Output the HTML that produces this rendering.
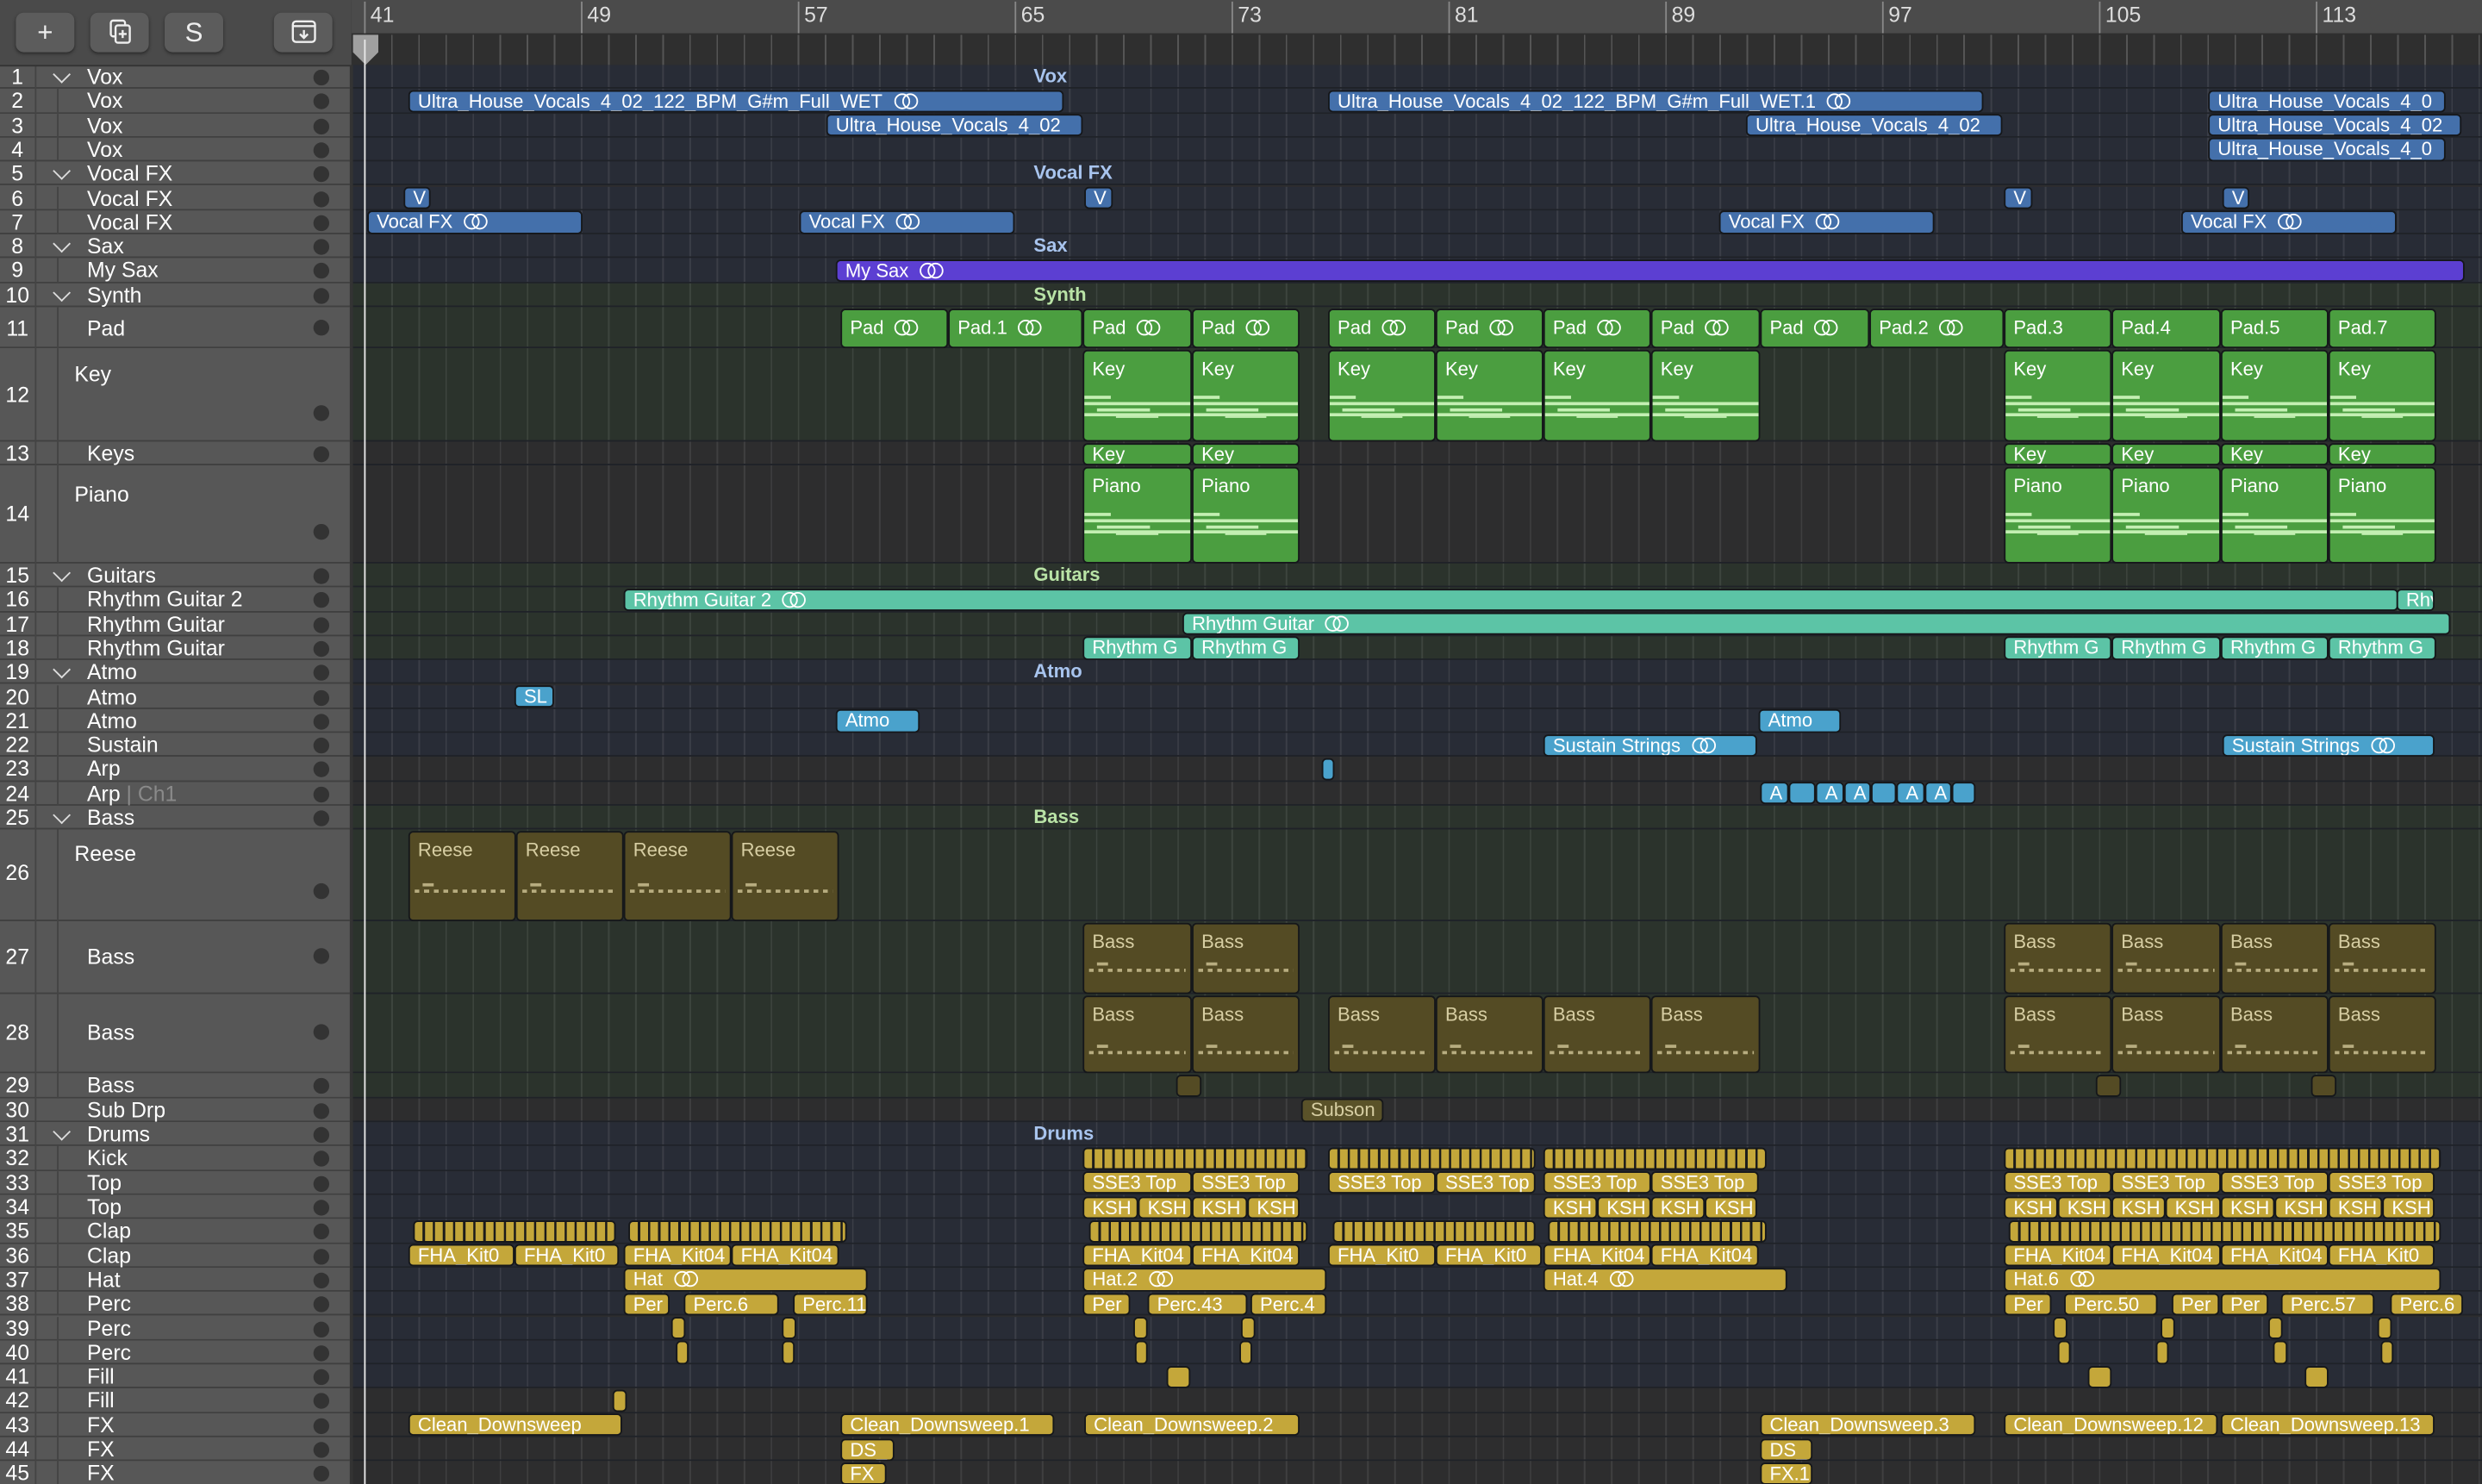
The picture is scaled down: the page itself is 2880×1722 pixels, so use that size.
<!DOCTYPE html>
<html><head><meta charset="utf-8">
<style>
html,body{margin:0;padding:0;background:#2d2d2e;overflow:hidden}
#S{position:absolute;left:0;top:0;width:1568px;height:937.6px;transform:scale(1.83674);transform-origin:0 0;font-family:"Liberation Sans",sans-serif;overflow:hidden;background:#2d2d2e}
.L{position:absolute;left:0;width:1568px;box-shadow:inset 0 -1px #1f2228;background-image:repeating-linear-gradient(to right,rgba(255,255,255,.085) 0 1px,transparent 1px 17.125px);background-position:230px 0}
.B{background-color:#282c36}.G{background-color:#2b332c}.N{background-color:#2d2d2e}
.r{position:absolute;top:0.5px;bottom:0.5px;box-sizing:border-box;border:1px solid #15171a;border-radius:3px;color:#fff;font-size:12px;font-weight:normal;line-height:12.5px;padding-left:5px;white-space:nowrap;overflow:hidden}
.b{background:#4470ab}.p{background:#5c3fd2}.g{background:#4b9e40}.t{background:#5cc4a6;}.lb{background:#4aa2cc}.o{background:#544b24;color:#d7cea3}.y{background:#c4a73a}
.k{background:repeating-linear-gradient(to right,#c4a73a 0 5px,#1b1b1b 5px 6.4px);padding:0}
.tall{padding-top:4px;line-height:14px}
.lp{display:inline-block;position:relative;width:15px;height:10px;margin-left:7px;vertical-align:-1px}
.lp:before,.lp:after{content:"";position:absolute;top:0;width:8px;height:8px;border:1.3px solid currentColor;border-radius:50%}
.lp:before{left:0}.lp:after{left:5px}
.nt{position:absolute;left:0;right:0;height:14px;background:linear-gradient(#c4efb3,#c4efb3) 0 0/25% 2px no-repeat,linear-gradient(#c4efb3,#c4efb3) 0 4px/100% 2px no-repeat,linear-gradient(#c4efb3,#c4efb3) 25% 8px/50% 2px no-repeat,linear-gradient(#c4efb3,#c4efb3) 0 11px/100% 2px no-repeat,linear-gradient(#c4efb3,#c4efb3) 50% 13px/40% 1px no-repeat}
.od{position:absolute;left:3px;right:3px;height:6px;background:repeating-linear-gradient(to right,#b8ad80 0 3px,transparent 3px 6px) 0 4px/100% 2px no-repeat,linear-gradient(#b8ad80,#b8ad80) 10% 0/12% 2px no-repeat}
.fl{position:absolute;left:653px;top:1px;font-size:12px;font-weight:bold;line-height:13px}
#TL{position:absolute;left:0;top:41px;width:221px;height:900px;background:#575757;z-index:5;box-shadow:1px 0 #3c3c3c}
.T{position:absolute;left:0;width:221px;box-shadow:inset 0 -1px #404040;color:#fff;font-size:13.5px}
.T .n{position:absolute;left:0;width:22px;text-align:center;font-size:13.5px}
.T .nm{position:absolute;left:55px}
.T .dt{position:absolute;left:198px;width:10px;height:10px;border-radius:50%;background:#333}
.T .cv{position:absolute;left:35px;width:7px;height:7px;border-right:1.3px solid #ddd;border-bottom:1.3px solid #ddd;transform:rotate(45deg)}
.ch{position:absolute;left:36px;top:0;bottom:0;border-left:1px solid #444}
#nc{position:absolute;left:22px;top:41px;width:1px;height:900px;background:#444;z-index:6}
#HD{position:absolute;left:0;top:0;width:222px;height:41px;background:#4a4a4a;z-index:7;box-shadow:0 1px #333}
.bt{position:absolute;top:8px;width:37px;height:25px;border-radius:5px;background:#5c5c5c;box-shadow:0 1px 2px #2a2a2a;color:#eee;text-align:center;font-size:17px;line-height:25px}
#RU{position:absolute;left:222px;top:0;width:1346px;height:41px;background:#2f2f2f;z-index:4}
#RU .top{position:absolute;left:0;top:0;right:0;height:21px;background:#4b4b4b}
#RU .tk{position:absolute;top:22px;bottom:0;left:8px;right:0;background:repeating-linear-gradient(to right,#555 0 1px,transparent 1px 17.125px)}
.bn{position:absolute;top:1px;color:#ddd;font-size:13.5px;border-left:1px solid #888;padding-left:3px;height:20px;line-height:17px}
</style></head><body><div id="S">

<div id="HD">
<div class="bt" style="left:10px">+</div>
<div class="bt" style="left:57px"><svg width="14" height="16" viewBox="0 0 14 16" style="margin-top:4px" fill="none" stroke="#eee" stroke-width="1.3"><rect x="1" y="1" width="9" height="10" rx="1.5"/><rect x="4" y="4" width="9" height="11" rx="1.5" fill="#5c5c5c"/><path d="M8.5 7v5M6 9.5h5"/></svg></div>
<div class="bt" style="left:104px">S</div>
<div class="bt" style="left:173px"><svg width="16" height="16" viewBox="0 0 16 16" style="margin-top:4px" fill="none" stroke="#eee" stroke-width="1.3"><rect x="1" y="1.5" width="14" height="13" rx="2"/><path d="M1 4.5h14M8 7v5M5.5 9.5L8 12l2.5-2.5"/></svg></div>
</div>

<div id="RU"><div class="top"></div><div class="tk"></div>
<div class="bn" style="left:8px">41</div><div class="bn" style="left:145px">49</div><div class="bn" style="left:282px">57</div><div class="bn" style="left:419px">65</div><div class="bn" style="left:556px">73</div><div class="bn" style="left:693px">81</div><div class="bn" style="left:830px">89</div><div class="bn" style="left:967px">97</div><div class="bn" style="left:1104px">105</div><div class="bn" style="left:1241px">113</div>
<svg style="position:absolute;left:0;top:21px" width="18" height="20"><path d="M1 1h16v11l-8 8-8-8z" fill="#a0a0a0"/></svg>
</div>
<div style="position:absolute;left:230px;top:25px;width:1px;height:913px;background:#e8e8e8;z-index:8"></div>

<div class="L B" style="top:41px;height:15.3px"><span class="fl" style="color:#a8c4ee">Vox</span></div>
<div class="L B" style="top:56.3px;height:15.3px"><b class="r b" style="left:258px;width:414px">Ultra_House_Vocals_4_02_122_BPM_G#m_Full_WET<i class="lp"></i></b><b class="r b" style="left:839px;width:414px">Ultra_House_Vocals_4_02_122_BPM_G#m_Full_WET.1<i class="lp"></i></b><b class="r b" style="left:1395px;width:150px">Ultra_House_Vocals_4_0</b></div>
<div class="L B" style="top:71.6px;height:15.3px"><b class="r b" style="left:522px;width:162px">Ultra_House_Vocals_4_02</b><b class="r b" style="left:1103px;width:162px">Ultra_House_Vocals_4_02</b><b class="r b" style="left:1395px;width:160px">Ultra_House_Vocals_4_02</b></div>
<div class="L B" style="top:86.9px;height:15.3px"><b class="r b" style="left:1395px;width:150px">Ultra_House_Vocals_4_0</b></div>
<div class="L B" style="top:102.2px;height:15.3px"><span class="fl" style="color:#a8c4ee">Vocal FX</span></div>
<div class="L B" style="top:117.5px;height:15.3px"><b class="r b" style="left:255px;width:17px">V</b><b class="r b" style="left:685px;width:18px">V</b><b class="r b" style="left:1266px;width:18px">V</b><b class="r b" style="left:1404px;width:17px">V</b></div>
<div class="L B" style="top:132.8px;height:15.3px"><b class="r b" style="left:232px;width:136px">Vocal FX<i class="lp"></i></b><b class="r b" style="left:505px;width:136px">Vocal FX<i class="lp"></i></b><b class="r b" style="left:1086px;width:136px">Vocal FX<i class="lp"></i></b><b class="r b" style="left:1378px;width:136px">Vocal FX<i class="lp"></i></b></div>
<div class="L B" style="top:148.1px;height:15.3px"><span class="fl" style="color:#a8c4ee">Sax</span></div>
<div class="L B" style="top:163.4px;height:15.3px"><b class="r p" style="left:528px;width:1029px">My Sax<i class="lp"></i></b></div>
<div class="L G" style="top:178.7px;height:15.3px"><span class="fl" style="color:#b9e3a6">Synth</span></div>
<div class="L G" style="top:194px;height:26px"><b class="r g tall" style="left:531px;width:68px">Pad<i class="lp"></i></b><b class="r g tall" style="left:599px;width:85px">Pad.1<i class="lp"></i></b><b class="r g tall" style="left:684px;width:69px">Pad<i class="lp"></i></b><b class="r g tall" style="left:753px;width:68px">Pad<i class="lp"></i></b><b class="r g tall" style="left:839px;width:68px">Pad<i class="lp"></i></b><b class="r g tall" style="left:907px;width:68px">Pad<i class="lp"></i></b><b class="r g tall" style="left:975px;width:68px">Pad<i class="lp"></i></b><b class="r g tall" style="left:1043px;width:69px">Pad<i class="lp"></i></b><b class="r g tall" style="left:1112px;width:69px">Pad<i class="lp"></i></b><b class="r g tall" style="left:1181px;width:85px">Pad.2<i class="lp"></i></b><b class="r g tall" style="left:1266px;width:68px">Pad.3</b><b class="r g tall" style="left:1334px;width:69px">Pad.4</b><b class="r g tall" style="left:1403px;width:68px">Pad.5</b><b class="r g tall" style="left:1471px;width:68px">Pad.7</b></div>
<div class="L G" style="top:220px;height:59px">
<b class="r g tall" style="left:684px;width:69px">Key<i class="nt" style="top:28px"></i></b><b class="r g tall" style="left:753px;width:68px">Key<i class="nt" style="top:28px"></i></b><b class="r g tall" style="left:839px;width:68px">Key<i class="nt" style="top:28px"></i></b><b class="r g tall" style="left:907px;width:68px">Key<i class="nt" style="top:28px"></i></b><b class="r g tall" style="left:975px;width:68px">Key<i class="nt" style="top:28px"></i></b><b class="r g tall" style="left:1043px;width:69px">Key<i class="nt" style="top:28px"></i></b><b class="r g tall" style="left:1266px;width:68px">Key<i class="nt" style="top:28px"></i></b><b class="r g tall" style="left:1334px;width:69px">Key<i class="nt" style="top:28px"></i></b><b class="r g tall" style="left:1403px;width:68px">Key<i class="nt" style="top:28px"></i></b><b class="r g tall" style="left:1471px;width:68px">Key<i class="nt" style="top:28px"></i></b></div>
<div class="L N" style="top:279px;height:15px"><b class="r g" style="left:684px;width:69px">Key</b><b class="r g" style="left:753px;width:68px">Key</b><b class="r g" style="left:1266px;width:68px">Key</b><b class="r g" style="left:1334px;width:69px">Key</b><b class="r g" style="left:1403px;width:68px">Key</b><b class="r g" style="left:1471px;width:68px">Key</b></div>
<div class="L N" style="top:294px;height:62px">
<b class="r g tall" style="left:684px;width:69px">Piano<i class="nt" style="top:28px"></i></b><b class="r g tall" style="left:753px;width:68px">Piano<i class="nt" style="top:28px"></i></b><b class="r g tall" style="left:1266px;width:68px">Piano<i class="nt" style="top:28px"></i></b><b class="r g tall" style="left:1334px;width:69px">Piano<i class="nt" style="top:28px"></i></b><b class="r g tall" style="left:1403px;width:68px">Piano<i class="nt" style="top:28px"></i></b><b class="r g tall" style="left:1471px;width:68px">Piano<i class="nt" style="top:28px"></i></b></div>
<div class="L G" style="top:356px;height:15.3px"><span class="fl" style="color:#b9e3a6">Guitars</span></div>
<div class="L G" style="top:371.3px;height:15.3px"><b class="r t" style="left:394px;width:1121px">Rhythm Guitar 2<i class="lp"></i></b><b class="r t" style="left:1514px;width:24px">Rhy</b></div>
<div class="L G" style="top:386.6px;height:15.3px"><b class="r t" style="left:747px;width:801px">Rhythm Guitar<i class="lp"></i></b></div>
<div class="L G" style="top:401.9px;height:15.3px"><b class="r t" style="left:684px;width:69px">Rhythm G</b><b class="r t" style="left:753px;width:68px">Rhythm G</b><b class="r t" style="left:1266px;width:68px">Rhythm G</b><b class="r t" style="left:1334px;width:69px">Rhythm G</b><b class="r t" style="left:1403px;width:68px">Rhythm G</b><b class="r t" style="left:1471px;width:68px">Rhythm G</b></div>
<div class="L B" style="top:417.2px;height:15.3px"><span class="fl" style="color:#a8c4ee">Atmo</span></div>
<div class="L B" style="top:432.5px;height:15.3px"><b class="r lb" style="left:325px;width:25px">SL</b></div>
<div class="L B" style="top:447.8px;height:15.3px"><b class="r lb" style="left:528px;width:53px">Atmo</b><b class="r lb" style="left:1111px;width:52px">Atmo</b></div>
<div class="L B" style="top:463.1px;height:15.3px"><b class="r lb" style="left:975px;width:135px">Sustain Strings<i class="lp"></i></b><b class="r lb" style="left:1404px;width:134px">Sustain Strings<i class="lp"></i></b></div>
<div class="L N" style="top:478.4px;height:15.3px"><b class="r lb" style="left:835px;width:8px;padding:0"></b></div>
<div class="L N" style="top:493.7px;height:15.3px"><b class="r lb" style="left:1112px;width:18px">A</b><b class="r lb" style="left:1130px;width:17px"></b><b class="r lb" style="left:1147px;width:18px">A</b><b class="r lb" style="left:1165px;width:17px">A</b><b class="r lb" style="left:1182px;width:16px"></b><b class="r lb" style="left:1198px;width:18px">A</b><b class="r lb" style="left:1216px;width:17px">A</b><b class="r lb" style="left:1233px;width:15px"></b></div>
<div class="L G" style="top:509px;height:15px"><span class="fl" style="color:#b9e3a6">Bass</span></div>
<div class="L G" style="top:524px;height:58px"><b class="r o tall" style="left:258px;width:68px">Reese<i class="od" style="top:32px"></i></b><b class="r o tall" style="left:326px;width:68px">Reese<i class="od" style="top:32px"></i></b><b class="r o tall" style="left:394px;width:68px">Reese<i class="od" style="top:32px"></i></b><b class="r o tall" style="left:462px;width:68px">Reese<i class="od" style="top:32px"></i></b></div>
<div class="L G" style="top:582px;height:46px"><b class="r o tall" style="left:684px;width:69px">Bass<i class="od" style="top:24px"></i></b><b class="r o tall" style="left:753px;width:68px">Bass<i class="od" style="top:24px"></i></b><b class="r o tall" style="left:1266px;width:68px">Bass<i class="od" style="top:24px"></i></b><b class="r o tall" style="left:1334px;width:69px">Bass<i class="od" style="top:24px"></i></b><b class="r o tall" style="left:1403px;width:68px">Bass<i class="od" style="top:24px"></i></b><b class="r o tall" style="left:1471px;width:68px">Bass<i class="od" style="top:24px"></i></b></div>
<div class="L G" style="top:628px;height:50px"><b class="r o tall" style="left:684px;width:69px">Bass<i class="od" style="top:30px"></i></b><b class="r o tall" style="left:753px;width:68px">Bass<i class="od" style="top:30px"></i></b><b class="r o tall" style="left:839px;width:68px">Bass<i class="od" style="top:30px"></i></b><b class="r o tall" style="left:907px;width:68px">Bass<i class="od" style="top:30px"></i></b><b class="r o tall" style="left:975px;width:68px">Bass<i class="od" style="top:30px"></i></b><b class="r o tall" style="left:1043px;width:69px">Bass<i class="od" style="top:30px"></i></b><b class="r o tall" style="left:1266px;width:68px">Bass<i class="od" style="top:30px"></i></b><b class="r o tall" style="left:1334px;width:69px">Bass<i class="od" style="top:30px"></i></b><b class="r o tall" style="left:1403px;width:68px">Bass<i class="od" style="top:30px"></i></b><b class="r o tall" style="left:1471px;width:68px">Bass<i class="od" style="top:30px"></i></b></div>
<div class="L G" style="top:678px;height:15.8px"><b class="r o" style="left:743px;width:16px"></b><b class="r o" style="left:1324px;width:16px"></b><b class="r o" style="left:1460px;width:16px"></b></div>
<div class="L N" style="top:693.8px;height:15.3px"><b class="r o" style="left:822px;width:52px;background:#5a5229">Subson</b></div>
<div class="L B" style="top:709.1px;height:15.3px"><span class="fl" style="color:#a8c4ee">Drums</span></div>
<div class="L B" style="top:724.4px;height:15.3px"><b class="r k" style="left:684px;width:142px"></b><b class="r k" style="left:839px;width:131px"></b><b class="r k" style="left:975px;width:141px"></b><b class="r k" style="left:1266px;width:276px"></b></div>
<div class="L B" style="top:739.7px;height:15.3px"><b class="r y" style="left:684px;width:69px">SSE3 Top</b><b class="r y" style="left:753px;width:68px">SSE3 Top</b><b class="r y" style="left:839px;width:68px">SSE3 Top</b><b class="r y" style="left:907px;width:63px">SSE3 Top</b><b class="r y" style="left:975px;width:68px">SSE3 Top</b><b class="r y" style="left:1043px;width:68px">SSE3 Top</b><b class="r y" style="left:1266px;width:68px">SSE3 Top</b><b class="r y" style="left:1334px;width:69px">SSE3 Top</b><b class="r y" style="left:1403px;width:68px">SSE3 Top</b><b class="r y" style="left:1471px;width:67px">SSE3 Top</b></div>
<div class="L B" style="top:755px;height:15.3px"><b class="r y" style="left:684px;width:35px">KSH</b><b class="r y" style="left:719px;width:34px">KSH</b><b class="r y" style="left:753px;width:35px">KSH</b><b class="r y" style="left:788px;width:33px">KSH</b><b class="r y" style="left:975px;width:34px">KSH</b><b class="r y" style="left:1009px;width:34px">KSH</b><b class="r y" style="left:1043px;width:34px">KSH</b><b class="r y" style="left:1077px;width:33px">KSH</b><b class="r y" style="left:1266px;width:34px">KSH</b><b class="r y" style="left:1300px;width:34px">KSH</b><b class="r y" style="left:1334px;width:34px">KSH</b><b class="r y" style="left:1368px;width:35px">KSH</b><b class="r y" style="left:1403px;width:34px">KSH</b><b class="r y" style="left:1437px;width:34px">KSH</b><b class="r y" style="left:1471px;width:34px">KSH</b><b class="r y" style="left:1505px;width:33px">KSH</b></div>
<div class="L B" style="top:770.3px;height:15.3px"><b class="r k" style="left:261px;width:128px"></b><b class="r k" style="left:397px;width:138px"></b><b class="r k" style="left:688px;width:138px"></b><b class="r k" style="left:842px;width:128px"></b><b class="r k" style="left:978px;width:138px"></b><b class="r k" style="left:1269px;width:273px"></b></div>
<div class="L B" style="top:785.6px;height:15.3px"><b class="r y" style="left:258px;width:67px">FHA_Kit0</b><b class="r y" style="left:325px;width:66px">FHA_Kit0</b><b class="r y" style="left:394px;width:68px">FHA_Kit04</b><b class="r y" style="left:462px;width:68px">FHA_Kit04</b><b class="r y" style="left:684px;width:69px">FHA_Kit04</b><b class="r y" style="left:753px;width:68px">FHA_Kit04</b><b class="r y" style="left:839px;width:68px">FHA_Kit0</b><b class="r y" style="left:907px;width:67px">FHA_Kit0</b><b class="r y" style="left:975px;width:68px">FHA_Kit04</b><b class="r y" style="left:1043px;width:68px">FHA_Kit04</b><b class="r y" style="left:1266px;width:68px">FHA_Kit04</b><b class="r y" style="left:1334px;width:69px">FHA_Kit04</b><b class="r y" style="left:1403px;width:68px">FHA_Kit04</b><b class="r y" style="left:1471px;width:67px">FHA_Kit0</b></div>
<div class="L B" style="top:800.9px;height:15.3px"><b class="r y" style="left:394px;width:154px">Hat<i class="lp"></i></b><b class="r y" style="left:684px;width:154px">Hat.2<i class="lp"></i></b><b class="r y" style="left:975px;width:154px">Hat.4<i class="lp"></i></b><b class="r y" style="left:1266px;width:276px">Hat.6<i class="lp"></i></b></div>
<div class="L B" style="top:816.2px;height:15.3px"><b class="r y" style="left:394px;width:29px">Per</b><b class="r y" style="left:432px;width:60px">Perc.6</b><b class="r y" style="left:501px;width:47px">Perc.11</b><b class="r y" style="left:684px;width:30px">Per</b><b class="r y" style="left:725px;width:63px">Perc.43</b><b class="r y" style="left:790px;width:48px">Perc.4</b><b class="r y" style="left:1266px;width:30px">Per</b><b class="r y" style="left:1304px;width:59px">Perc.50</b><b class="r y" style="left:1372px;width:30px">Per</b><b class="r y" style="left:1403px;width:30px">Per</b><b class="r y" style="left:1441px;width:59px">Perc.57</b><b class="r y" style="left:1510px;width:46px">Perc.6</b></div>
<div class="L B" style="top:831.5px;height:15.3px"><b class="r y" style="left:424px;width:9px;padding:0"></b><b class="r y" style="left:494px;width:9px;padding:0"></b><b class="r y" style="left:716px;width:9px;padding:0"></b><b class="r y" style="left:784px;width:9px;padding:0"></b><b class="r y" style="left:1297px;width:9px;padding:0"></b><b class="r y" style="left:1365px;width:9px;padding:0"></b><b class="r y" style="left:1433px;width:9px;padding:0"></b><b class="r y" style="left:1502px;width:9px;padding:0"></b></div>
<div class="L B" style="top:846.8px;height:15.3px"><b class="r y" style="left:427px;width:8px;padding:0"></b><b class="r y" style="left:494px;width:8px;padding:0"></b><b class="r y" style="left:717px;width:8px;padding:0"></b><b class="r y" style="left:783px;width:8px;padding:0"></b><b class="r y" style="left:1300px;width:8px;padding:0"></b><b class="r y" style="left:1362px;width:8px;padding:0"></b><b class="r y" style="left:1436px;width:9px;padding:0"></b><b class="r y" style="left:1504px;width:8px;padding:0"></b></div>
<div class="L B" style="top:862.1px;height:15.3px"><b class="r y" style="left:737px;width:15px;padding:0"></b><b class="r y" style="left:1319px;width:15px;padding:0"></b><b class="r y" style="left:1456px;width:15px;padding:0"></b></div>
<div class="L N" style="top:877.4px;height:15.3px"><b class="r y" style="left:387px;width:9px;padding:0"></b></div>
<div class="L N" style="top:892.7px;height:15.3px"><b class="r y" style="left:258px;width:135px">Clean_Downsweep</b><b class="r y" style="left:531px;width:135px">Clean_Downsweep.1</b><b class="r y" style="left:685px;width:136px">Clean_Downsweep.2</b><b class="r y" style="left:1112px;width:136px">Clean_Downsweep.3</b><b class="r y" style="left:1266px;width:135px">Clean_Downsweep.12</b><b class="r y" style="left:1403px;width:135px">Clean_Downsweep.13</b></div>
<div class="L N" style="top:908px;height:15.3px"><b class="r y" style="left:531px;width:34px">DS_</b><b class="r y" style="left:1112px;width:33px">DS_</b></div>
<div class="L N" style="top:923.3px;height:15.3px"><b class="r y" style="left:531px;width:29px">FX</b><b class="r y" style="left:1112px;width:33px">FX.1</b></div>

<div id="nc"></div>
<div id="TL">
<div class="T" style="top:0;height:15.3px"><span class="n">1</span><i class="cv" style="top:2px"></i><span class="nm">Vox</span><i class="dt" style="top:3px"></i></div>
<div class="T" style="top:15.3px;height:15.3px"><i class="ch"></i><span class="n">2</span><span class="nm">Vox</span><i class="dt" style="top:3px"></i></div>
<div class="T" style="top:30.6px;height:15.3px"><i class="ch"></i><span class="n">3</span><span class="nm">Vox</span><i class="dt" style="top:3px"></i></div>
<div class="T" style="top:45.9px;height:15.3px"><i class="ch"></i><span class="n">4</span><span class="nm">Vox</span><i class="dt" style="top:3px"></i></div>
<div class="T" style="top:61.2px;height:15.3px"><span class="n">5</span><i class="cv" style="top:2px"></i><span class="nm">Vocal FX</span><i class="dt" style="top:3px"></i></div>
<div class="T" style="top:76.5px;height:15.3px"><i class="ch"></i><span class="n">6</span><span class="nm">Vocal FX</span><i class="dt" style="top:3px"></i></div>
<div class="T" style="top:91.8px;height:15.3px"><i class="ch"></i><span class="n">7</span><span class="nm">Vocal FX</span><i class="dt" style="top:3px"></i></div>
<div class="T" style="top:107.1px;height:15.3px"><span class="n">8</span><i class="cv" style="top:2px"></i><span class="nm">Sax</span><i class="dt" style="top:3px"></i></div>
<div class="T" style="top:122.4px;height:15.3px"><i class="ch"></i><span class="n">9</span><span class="nm">My Sax</span><i class="dt" style="top:3px"></i></div>
<div class="T" style="top:137.7px;height:15.3px"><span class="n">10</span><i class="cv" style="top:2px"></i><span class="nm">Synth</span><i class="dt" style="top:3px"></i></div>
<div class="T" style="top:153px;height:26px"><i class="ch"></i><span class="n" style="top:6px">11</span><span class="nm" style="top:6px">Pad</span><i class="dt" style="top:8px"></i></div>
<div class="T" style="top:179px;height:59px"><i class="ch"></i><span class="n" style="top:22px">12</span><span class="nm" style="left:47px;top:9px">Key</span><i class="dt" style="top:36px"></i></div>
<div class="T" style="top:238px;height:15px"><i class="ch"></i><span class="n">13</span><span class="nm">Keys</span><i class="dt" style="top:3px"></i></div>
<div class="T" style="top:253px;height:62px"><i class="ch"></i><span class="n" style="top:23px">14</span><span class="nm" style="left:47px;top:11px">Piano</span><i class="dt" style="top:37px"></i></div>
<div class="T" style="top:315px;height:15.3px"><span class="n">15</span><i class="cv" style="top:2px"></i><span class="nm">Guitars</span><i class="dt" style="top:3px"></i></div>
<div class="T" style="top:330.3px;height:15.3px"><i class="ch"></i><span class="n">16</span><span class="nm">Rhythm Guitar 2</span><i class="dt" style="top:3px"></i></div>
<div class="T" style="top:345.6px;height:15.3px"><i class="ch"></i><span class="n">17</span><span class="nm">Rhythm Guitar</span><i class="dt" style="top:3px"></i></div>
<div class="T" style="top:360.9px;height:15.3px"><i class="ch"></i><span class="n">18</span><span class="nm">Rhythm Guitar</span><i class="dt" style="top:3px"></i></div>
<div class="T" style="top:376.2px;height:15.3px"><span class="n">19</span><i class="cv" style="top:2px"></i><span class="nm">Atmo</span><i class="dt" style="top:3px"></i></div>
<div class="T" style="top:391.5px;height:15.3px"><i class="ch"></i><span class="n">20</span><span class="nm">Atmo</span><i class="dt" style="top:3px"></i></div>
<div class="T" style="top:406.8px;height:15.3px"><i class="ch"></i><span class="n">21</span><span class="nm">Atmo</span><i class="dt" style="top:3px"></i></div>
<div class="T" style="top:422.1px;height:15.3px"><i class="ch"></i><span class="n">22</span><span class="nm">Sustain</span><i class="dt" style="top:3px"></i></div>
<div class="T" style="top:437.4px;height:15.3px"><i class="ch"></i><span class="n">23</span><span class="nm">Arp</span><i class="dt" style="top:3px"></i></div>
<div class="T" style="top:452.7px;height:15.3px"><i class="ch"></i><span class="n">24</span><span class="nm">Arp <span style="color:#8a8a8a">| Ch1</span></span><i class="dt" style="top:3px"></i></div>
<div class="T" style="top:468px;height:15px"><span class="n">25</span><i class="cv" style="top:2px"></i><span class="nm">Bass</span><i class="dt" style="top:3px"></i></div>
<div class="T" style="top:483px;height:58px"><i class="ch"></i><span class="n" style="top:20px">26</span><span class="nm" style="left:47px;top:8px">Reese</span><i class="dt" style="top:34px"></i></div>
<div class="T" style="top:541px;height:46px"><i class="ch"></i><span class="n" style="top:15px">27</span><span class="nm" style="top:15px">Bass</span><i class="dt" style="top:17px"></i></div>
<div class="T" style="top:587px;height:50px"><i class="ch"></i><span class="n" style="top:17px">28</span><span class="nm" style="top:17px">Bass</span><i class="dt" style="top:19px"></i></div>
<div class="T" style="top:637px;height:15.8px"><i class="ch"></i><span class="n">29</span><span class="nm">Bass</span><i class="dt" style="top:3px"></i></div>
<div class="T" style="top:652.8px;height:15.3px"><span class="n">30</span><span class="nm">Sub Drp</span><i class="dt" style="top:3px"></i></div>
<div class="T" style="top:668.1px;height:15.3px"><span class="n">31</span><i class="cv" style="top:2px"></i><span class="nm">Drums</span><i class="dt" style="top:3px"></i></div>
<div class="T" style="top:683.4px;height:15.3px"><i class="ch"></i><span class="n">32</span><span class="nm">Kick</span><i class="dt" style="top:3px"></i></div>
<div class="T" style="top:698.7px;height:15.3px"><i class="ch"></i><span class="n">33</span><span class="nm">Top</span><i class="dt" style="top:3px"></i></div>
<div class="T" style="top:714px;height:15.3px"><i class="ch"></i><span class="n">34</span><span class="nm">Top</span><i class="dt" style="top:3px"></i></div>
<div class="T" style="top:729.3px;height:15.3px"><i class="ch"></i><span class="n">35</span><span class="nm">Clap</span><i class="dt" style="top:3px"></i></div>
<div class="T" style="top:744.6px;height:15.3px"><i class="ch"></i><span class="n">36</span><span class="nm">Clap</span><i class="dt" style="top:3px"></i></div>
<div class="T" style="top:759.9px;height:15.3px"><i class="ch"></i><span class="n">37</span><span class="nm">Hat</span><i class="dt" style="top:3px"></i></div>
<div class="T" style="top:775.2px;height:15.3px"><i class="ch"></i><span class="n">38</span><span class="nm">Perc</span><i class="dt" style="top:3px"></i></div>
<div class="T" style="top:790.5px;height:15.3px"><i class="ch"></i><span class="n">39</span><span class="nm">Perc</span><i class="dt" style="top:3px"></i></div>
<div class="T" style="top:805.8px;height:15.3px"><i class="ch"></i><span class="n">40</span><span class="nm">Perc</span><i class="dt" style="top:3px"></i></div>
<div class="T" style="top:821.1px;height:15.3px"><i class="ch"></i><span class="n">41</span><span class="nm">Fill</span><i class="dt" style="top:3px"></i></div>
<div class="T" style="top:836.4px;height:15.3px"><i class="ch"></i><span class="n">42</span><span class="nm">Fill</span><i class="dt" style="top:3px"></i></div>
<div class="T" style="top:851.7px;height:15.3px"><i class="ch"></i><span class="n">43</span><span class="nm">FX</span><i class="dt" style="top:3px"></i></div>
<div class="T" style="top:867px;height:15.3px"><i class="ch"></i><span class="n">44</span><span class="nm">FX</span><i class="dt" style="top:3px"></i></div>
<div class="T" style="top:882.3px;height:15.3px"><i class="ch"></i><span class="n">45</span><span class="nm">FX</span><i class="dt" style="top:3px"></i></div>
</div>
<div style="position:absolute;left:221px;top:41px;width:2px;height:900px;background:#333;z-index:6"></div>
</div></body></html>
